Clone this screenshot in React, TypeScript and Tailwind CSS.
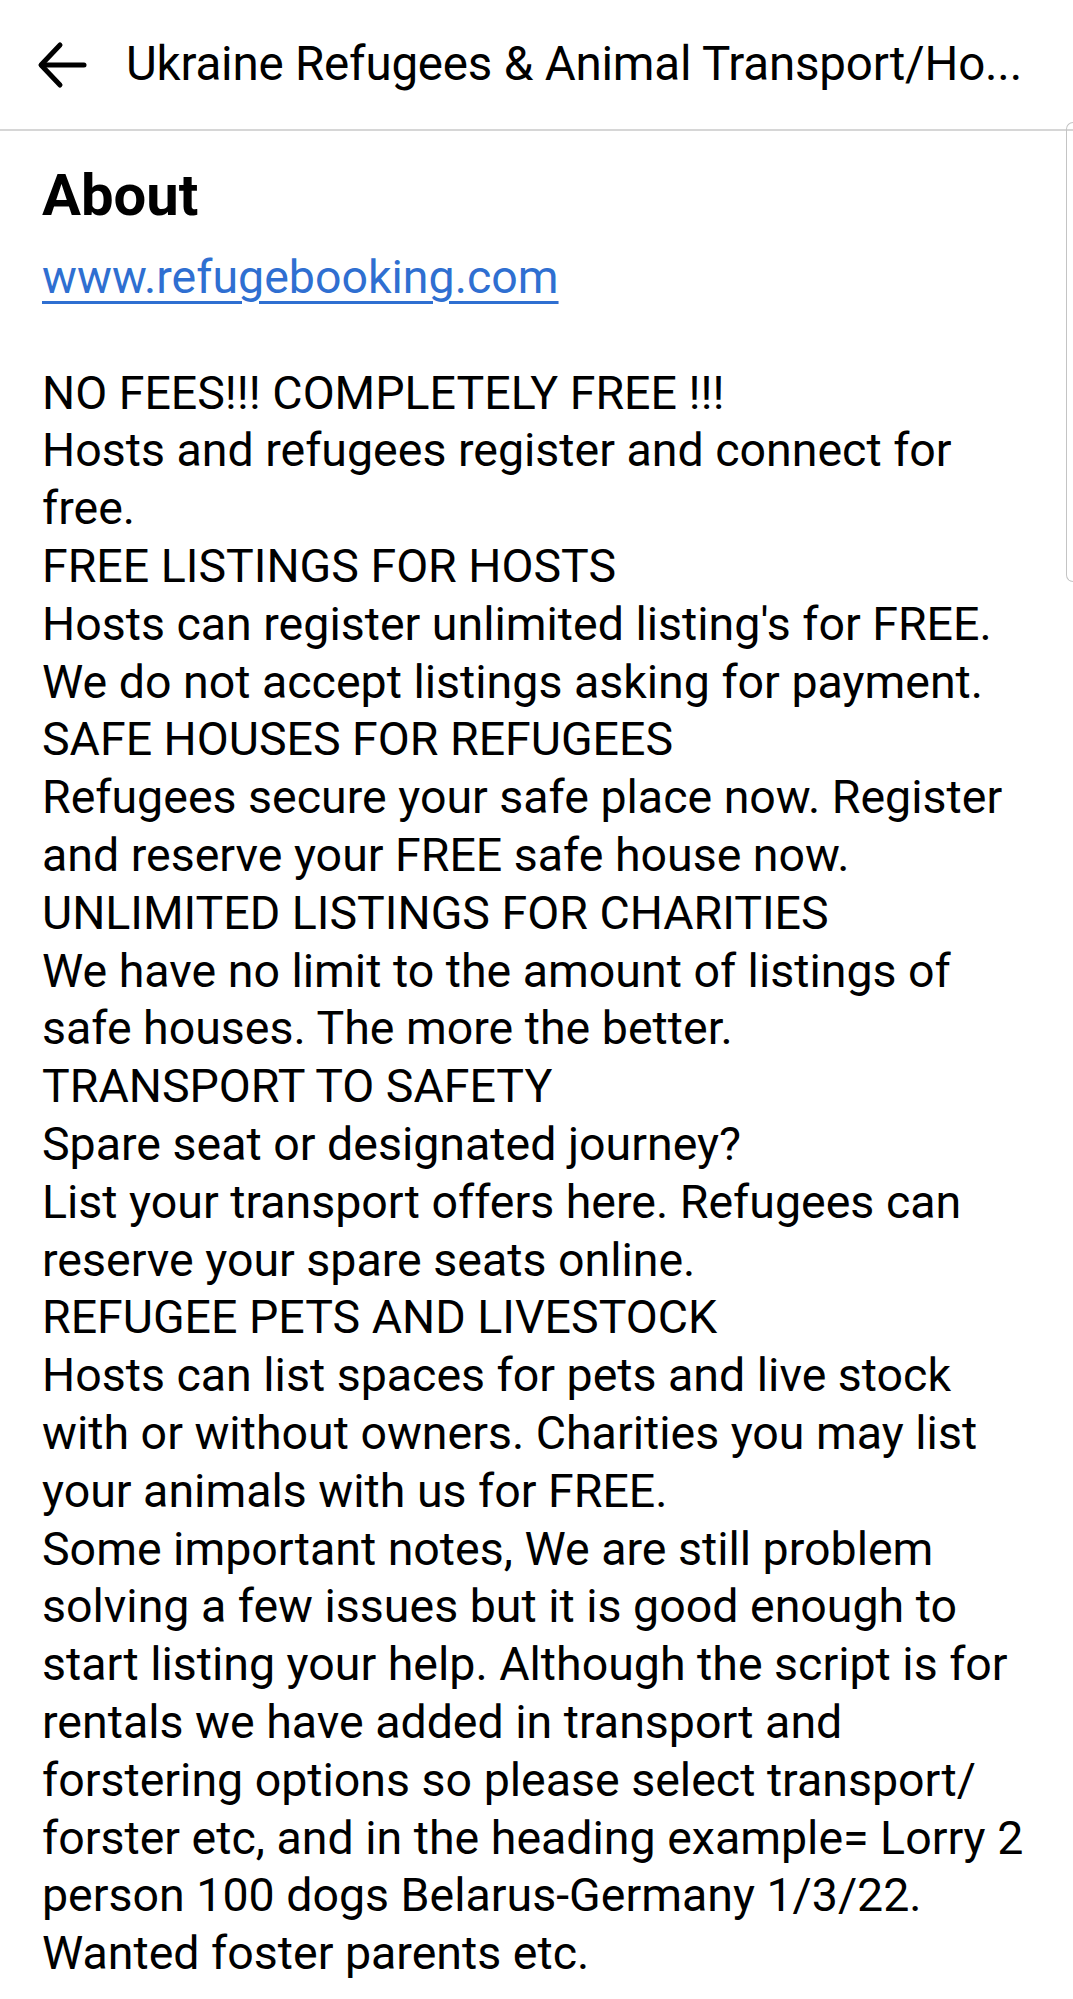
const lines = [
  'NO FEES!!! COMPLETELY FREE !!!',
  'Hosts and refugees register and connect for',
  'free.',
  'FREE LISTINGS FOR HOSTS',
  "Hosts can register unlimited listing's for FREE.",
  'We do not accept listings asking for payment.',
  'SAFE HOUSES FOR REFUGEES',
  'Refugees secure your safe place now. Register',
  'and reserve your FREE safe house now.',
  'UNLIMITED LISTINGS FOR CHARITIES',
  'We have no limit to the amount of listings of',
  'safe houses. The more the better.',
  'TRANSPORT TO SAFETY',
  'Spare seat or designated journey?',
  'List your transport offers here. Refugees can',
  'reserve your spare seats online.',
  'REFUGEE PETS AND LIVESTOCK',
  'Hosts can list spaces for pets and live stock',
  'with or without owners. Charities you may list',
  'your animals with us for FREE.',
  'Some important notes, We are still problem',
  'solving a few issues but it is good enough to',
  'start listing your help. Although the script is for',
  'rentals we have added in transport and',
  'forstering options so please select transport/',
  'forster etc, and in the heading example= Lorry 2',
  'person 100 dogs Belarus-Germany 1/3/22.',
  'Wanted foster parents etc.',
];

const BackArrow = () => (
  <svg width="52" height="52" viewBox="0 0 52 52" fill="none" stroke="#000" strokeWidth="5" strokeLinecap="round" strokeLinejoin="round">
    <path d="M48 26H6" />
    <path d="M24 6L5 26l19 20" />
  </svg>
);

export default function App() {
  return (
    <div className="relative min-h-[1999px] w-full overflow-hidden bg-white text-black" style={{ fontFamily: 'Roboto, "Noto Sans", sans-serif' }}>
      <header className="flex h-[131px] items-center gap-[38px] border-b-2 border-[#d6d6d6] pl-[36px] pr-[40px]">
        <BackArrow />
        <h1 className="whitespace-nowrap text-[47.5px] leading-none tracking-[-0.2px]">
          Ukraine Refugees &amp; Animal Transport/Ho...
        </h1>
      </header>

      <div className="absolute right-0 top-[122px] h-[460px] w-[7px] rounded-l-full border border-r-0 border-[#c4c4c4]" />

      <main className="pl-[42px] pr-[20px] pt-[30px]">
        <h2 className="text-[58px] font-bold leading-[68px]">About</h2>
        <div className="mt-[20px] text-[46.5px] leading-[57.8px]">
          <a href="#" className="block whitespace-nowrap text-[#2f6fd1] underline decoration-[3px] underline-offset-[8px]">
            www.refugebooking.com
          </a>
          <div className="h-[57.8px]" />
          {lines.map((line, i) => (
            <div key={i} className="whitespace-nowrap">
              {line}
            </div>
          ))}
        </div>
      </main>
    </div>
  );
}
